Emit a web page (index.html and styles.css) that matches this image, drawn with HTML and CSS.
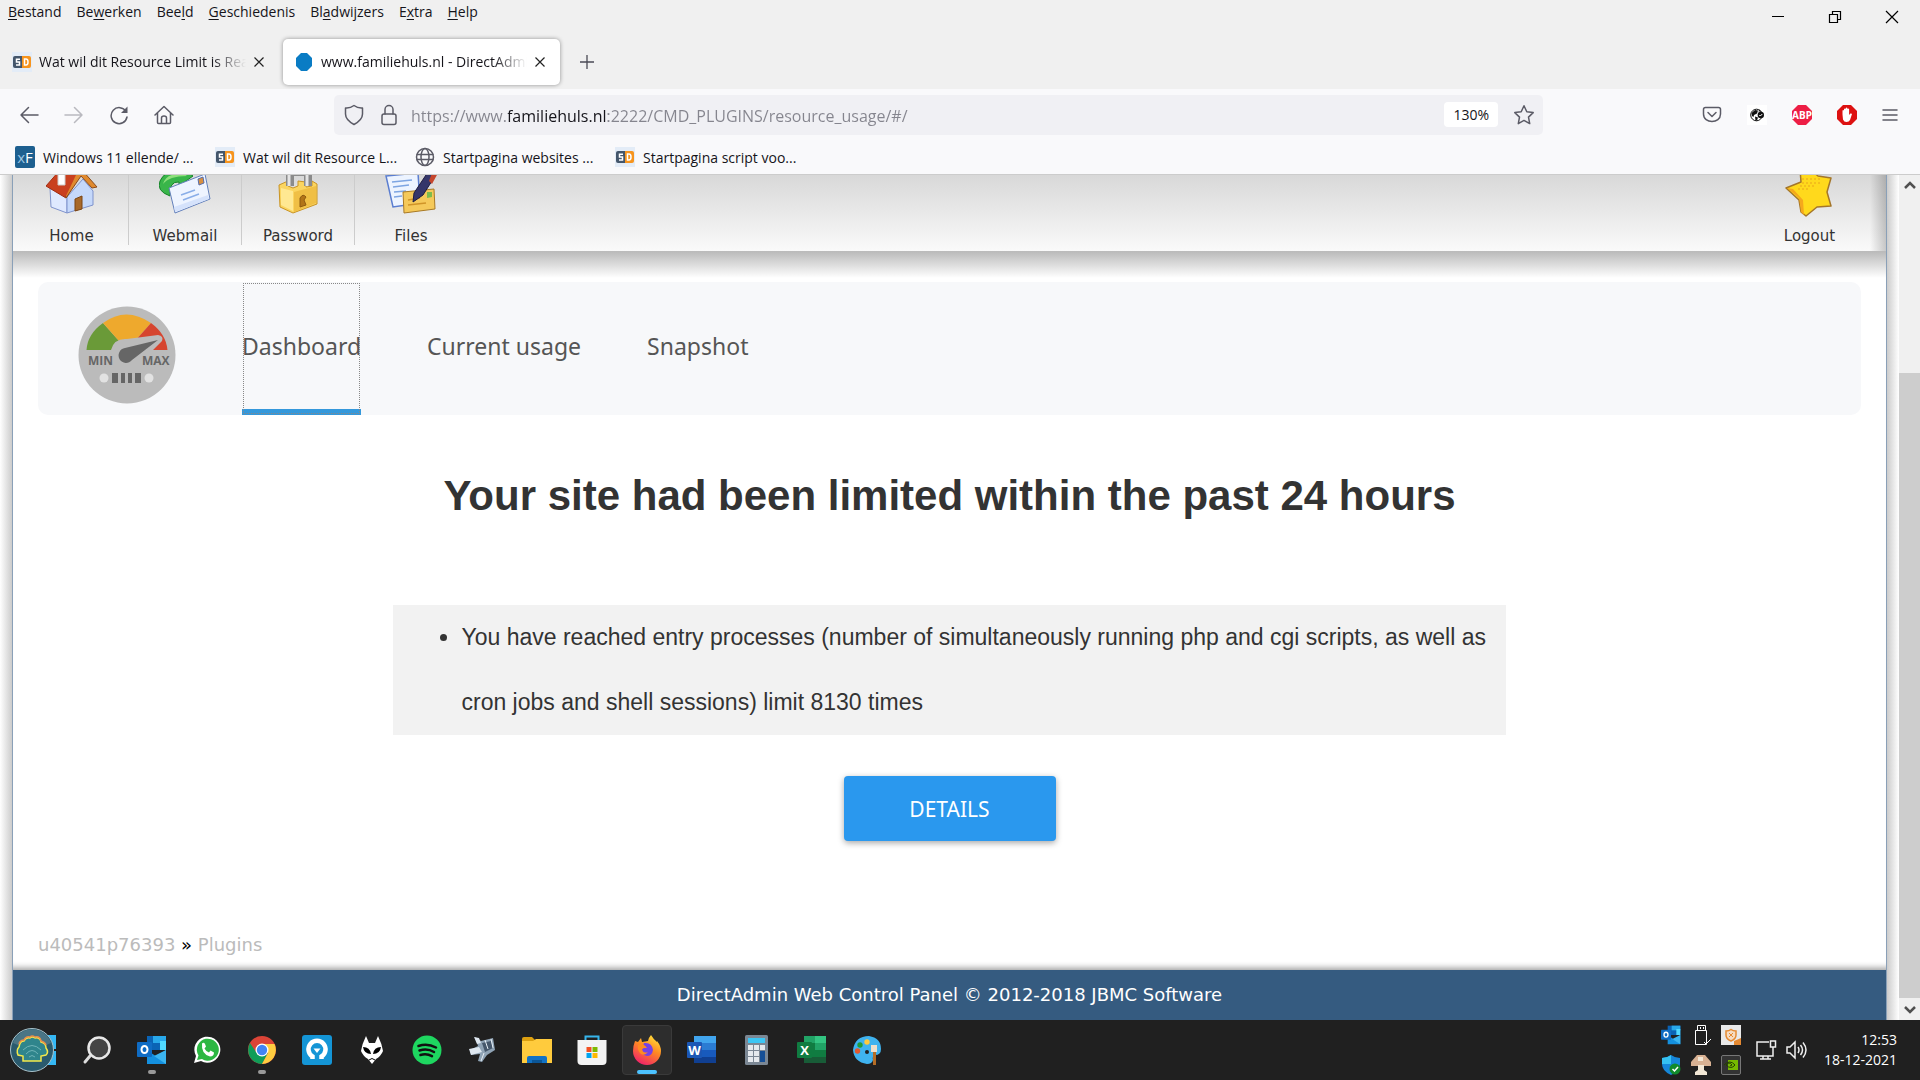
FILE: index.html
```html
<!DOCTYPE html>
<html lang="nl">
<head>
    <meta charset="UTF-8">
    <meta name="viewport" content="width=device-width, initial-scale=1.0">
    <title>www.familiehuls.nl - DirectAdmin</title>
    <link rel="stylesheet" href="styles.css">
</head>
<body>
    <svg class="defs" aria-hidden="true">
        <symbol id="sd" viewBox="0 0 20 20">
            <path fill="#e3ecf7" d="M0 0h20v20H0z"/>
            <path fill="#44566b" d="M3 4h7v12H3a2 2 0 0 1-2-2V6a2 2 0 0 1 2-2z"/>
            <path fill="#f7941d" d="M10 4h7a2 2 0 0 1 2 2v8a2 2 0 0 1-2 2h-7z"/>
            <path fill="none" stroke="#fff" stroke-width="1.5" d="M8 7.200H4.500v2.800H7.500v3H4M12.500 7v6h1.500q2 0 2-3t-2-3z"/>
        </symbol>
        <symbol id="close" viewBox="0 0 12 12">
            <path fill="none" stroke="#222" stroke-width="1.200" d="M1.500 1.500l9 9M10.500 1.500l-9 9"/>
        </symbol>
        <symbol id="outlook" viewBox="0 0 30 30">
            <path fill="#0a63b5" d="M10 1h19v14H10z"/>
            <path fill="#28a8ea" d="M16 1h13v7H16z"/>
            <path fill="#50d9ff" d="M23 6h6v9h-6z"/>
            <path fill="#1490df" d="M10 15l10 7 9-7v14H10z"/>
            <path fill="#3bb5f0" d="M29 15v14L17 21z"/>
            <rect x="0" y="7" width="15" height="15" rx="1" fill="#0f6cc4"/>
            <ellipse cx="7.500" cy="14.500" rx="3" ry="3.600" fill="none" stroke="#fff" stroke-width="2"/>
        </symbol>
    </svg>

    <header class="chrome">
        <div class="titlebar">
            <nav class="menubar">
                <button type="button"><u>B</u>estand</button>
                <button type="button">Be<u>w</u>erken</button>
                <button type="button">Bee<u>l</u>d</button>
                <button type="button"><u>G</u>eschiedenis</button>
                <button type="button">Bl<u>a</u>dwijzers</button>
                <button type="button">E<u>x</u>tra</button>
                <button type="button"><u>H</u>elp</button>
            </nav>
            <div class="window-buttons">
                <button type="button" aria-label="Minimaliseren"><svg width="14" height="14" viewBox="0 0 14 14"><path stroke="#000" d="M1 6.500h12"/></svg></button>
                <button type="button" aria-label="Verkleinen"><svg width="14" height="14" viewBox="0 0 14 14"><path fill="none" stroke="#000" stroke-width="1.200" d="M1.500 4.500h8v8h-8zM4.500 4.500v-3h8v8h-3"/></svg></button>
                <button type="button" aria-label="Sluiten"><svg width="14" height="14" viewBox="0 0 14 14"><path stroke="#000" stroke-width="1.200" d="M1 1l12 12M13 1L1 13"/></svg></button>
            </div>
        </div>

        <div class="tabstrip">
            <div class="browser-tab">
                <svg class="favicon" width="20" height="20"><use href="#sd"/></svg>
                <button type="button" class="tab-title">Wat wil dit Resource Limit is Reached</button>
                <button type="button" class="tab-close" aria-label="Tabblad sluiten"><svg width="12" height="12"><use href="#close"/></svg></button>
            </div>
            <div class="browser-tab active">
                <svg class="favicon" width="20" height="20" viewBox="0 0 20 20"><path fill="#0a7cc4" d="M7 1h6l5 5v8l-5 5H7l-5-5V6z"/></svg>
                <button type="button" class="tab-title">www.familiehuls.nl - DirectAdmin</button>
                <button type="button" class="tab-close" aria-label="Tabblad sluiten"><svg width="12" height="12"><use href="#close"/></svg></button>
            </div>
            <button type="button" class="new-tab" aria-label="Nieuw tabblad"><svg width="16" height="16" viewBox="0 0 16 16"><path stroke="#4a4a55" stroke-width="1.300" d="M8 1v14M1 8h14"/></svg></button>
        </div>

        <div class="navbar">
            <div class="nav-buttons">
                <button type="button" aria-label="Terug"><svg width="20" height="20" viewBox="0 0 20 20"><path class="line" d="M19 10H2M9.500 2.500L2 10l7.500 7.500"/></svg></button>
                <button type="button" class="dim" aria-label="Vooruit"><svg width="20" height="20" viewBox="0 0 20 20"><path class="line" d="M1 10h17M10.500 2.500L18 10l-7.500 7.500"/></svg></button>
                <button type="button" aria-label="Vernieuwen"><svg width="20" height="20" viewBox="0 0 20 20"><path class="line" d="M17 6.500A8 8 0 1 0 18 12"/><path fill="#5b5b66" d="M18.500 1.500V8H12z"/></svg></button>
                <button type="button" aria-label="Startpagina"><svg width="20" height="20" viewBox="0 0 20 20"><path class="line" d="M1 10l9-8.500L19 10M3.500 8v9.500q0 1 1 1h11q1 0 1-1V8M7.500 18.500V13q0-2 2.500-2t2.500 2v5.500"/></svg></button>
            </div>
            <div class="urlbar">
                <svg width="20" height="22" viewBox="0 0 20 22"><path class="line" d="M10 1.500q4 3 8.500 2.500V10c0 5-4 8-8.500 10.500C5.500 18 1.500 15 1.500 10V4Q6 4.500 10 1.500z"/></svg>
                <svg width="20" height="22" viewBox="0 0 20 22"><rect class="line" x="3" y="10" width="14" height="10.500" rx="2"/><path class="line" d="M6 10V5.500a4 4 0 0 1 8 0V10"/></svg>
                <input type="text" class="url" aria-label="Adres" value="https://www.familiehuls.nl:2222/CMD_PLUGINS/resource_usage/#/">
                <button type="button" class="zoom">130%</button>
                <button type="button" aria-label="Bladwijzer"><svg width="22" height="22" viewBox="0 0 22 22"><path class="line" d="M11 1.800l2.800 6 6.400.8-4.700 4.500 1.200 6.500L11 16.400l-5.700 3.200 1.200-6.500L1.800 8.600l6.400-.8z"/></svg></button>
            </div>
            <div class="extensions">
                <button type="button" aria-label="Pocket"><svg width="20" height="20" viewBox="0 0 20 20"><path class="line" d="M3.500 2.500h13q2 0 2 2V9c0 10-17 10-17 0V4.500q0-2 2-2zM6 7.500l4 4 4-4"/></svg></button>
                <button type="button" aria-label="Wereldbol"><svg width="20" height="20" viewBox="0 0 20 20"><path fill="#fff" d="M0 0h20v20H0z"/><circle cx="9.500" cy="10" r="5.800" fill="#fff" stroke="#111"/><path fill="#111" d="M4.500 8l3.500-3 3 .5-1 3-3 1.500-.5 2-1.500-1zM8 11.500l3 1-1 3-1.500.3zM12 4.500l2.500 2h-3z"/><circle cx="13.800" cy="10" r="3.200" fill="#111"/><path stroke="#fff" fill="none" d="M12.300 10l1 1 2-2"/></svg></button>
                <button type="button" aria-label="Adblock Plus"><svg width="20" height="20" viewBox="0 0 20 20"><path fill="#ed1e45" d="M6 0h8l6 6v8l-6 6H6l-6-6V6z"/><text x="10" y="13.500" text-anchor="middle" class="abp">ABP</text></svg></button>
                <button type="button" aria-label="Adblock"><svg width="20" height="20" viewBox="0 0 20 20"><path fill="#dd1111" d="M6 0h8l6 6v8l-6 6H6l-6-6V6z"/><path fill="#fff" d="M5.500 9.500V5.600q.8-1 1.500 0V4q.9-1 1.700 0V3q.9-1 1.700 0v1q.9-1 1.700 0v6l1.300-1.500q1.200-.4 1.600.5L13 15q-1 2-3.500 2t-3.500-2.500z"/></svg></button>
                <button type="button" aria-label="Menu"><svg width="16" height="16" viewBox="0 0 16 16"><path class="line" d="M1 3h14M1 8h14M1 13h14"/></svg></button>
            </div>
        </div>

        <nav class="bookmarks">
            <a href="#"><svg width="20" height="22" viewBox="0 0 20 22"><rect width="20" height="22" rx="2" fill="#1d5f8f"/><text x="10" y="17" text-anchor="middle" class="xf"><tspan fill="#9cc5e3">x</tspan>F</text></svg>Windows 11 ellende/ ...</a>
            <a href="#"><svg width="20" height="20"><use href="#sd"/></svg>Wat wil dit Resource L...</a>
            <a href="#"><svg width="20" height="20" viewBox="0 0 20 20"><circle class="line" cx="10" cy="10" r="8.500"/><ellipse class="line" cx="10" cy="10" rx="4" ry="8.500"/><path class="line" d="M2 7.500h16M2 12.500h16"/></svg>Startpagina websites ...</a>
            <a href="#"><svg width="20" height="20"><use href="#sd"/></svg>Startpagina script voo...</a>
        </nav>
    </header>

    <div class="viewport">
        <div class="gutter left"></div>
        <div class="page">
            <header class="skin-header">
                <nav class="skin-nav">
                    <a href="#">
                        <svg width="52" height="39" viewBox="0 -1 52 39"><path fill="#dfe9ff" stroke="#7f93cc" d="M4 12l17 9v16L5 31z"/><path fill="#c5d8fa" stroke="#7f93cc" d="M21 21L37 3l10 12v14L21 37z"/><path fill="#c9401f" stroke="#a02c12" d="M0 10L14-6 34-2 20 22z"/><path fill="#e08a2e" stroke="#8a4a1c" d="M14-6h22l15 17-5 1L35 0 20 22z"/><path fill="#c9401f" d="M1 10L14-6l16 5-10 21z"/><path fill="#fff" stroke="#ccc" d="M12-4h7v13h-7z"/><path fill="#a8692a" stroke="#7b4413" d="M29 23l7-3v13l-7 2z"/></svg>
                        Home
                    </a>
                    <a href="#">
                        <svg width="52" height="39" viewBox="0 -1 52 39"><path fill="#39b54a" stroke="#168329" d="M11 20Q-3 15 1 5 6-6 20-5v-5l14 10-14 10V6Q10 5 11 20z"/><path fill="#8fe07d" d="M4 8Q7-2 20-2l1-3 7 5Q10 0 4 8z"/><path fill="#eef4ff" stroke="#6380bb" d="M10 12L46-2l5 25-35 14z"/><path fill="#d5e2fb" d="M15 31l34-12 1 4-34 13z"/><path stroke="#8aaee8" stroke-width="1.500" d="M22 19l14-5M24 24l16-6"/><path fill="#d99040" stroke="#566caa" d="M39 3l5-2 1 6-5 2z"/></svg>
                        Webmail
                    </a>
                    <a href="#">
                        <svg width="52" height="39" viewBox="0 -1 52 39"><path fill="#fbd560" stroke="#c99425" d="M7 9l9-4v5l5 2 5-2V5l8 1v5l6-1V5l5 3v20L21 37 8 31z"/><path fill="#ffe892" d="M9 12l12 3v20L9 29z"/><path fill="#f0bf45" d="M22 16l22-6v17l-22 9z"/><path fill="none" stroke="#8b8b8b" stroke-width="8" d="M18 10V-4h18v14"/><path fill="none" stroke="#e4e4e4" stroke-width="3" d="M17 10V-4h18v14"/><path fill="#b27418" stroke="#8e5a10" d="M28 22q3-5 6-1l-2 3 2 5-6 2z"/></svg>
                        Password
                    </a>
                    <a href="#">
                        <svg width="52" height="39" viewBox="0 -1 52 39"><path fill="#edf4ff" stroke="#5b7ed0" stroke-width="1.500" d="M1 0l32-3 2 30-27 4z"/><path stroke="#7da5e2" stroke-width="1.500" d="M7 6l20-2M8 11l16-2M9 16l12-1M9 21l8-1"/><path fill="#f5c95a" stroke="#a97a25" d="M18 16l31-3 1 20-31 4z"/><path stroke="#d09428" stroke-width="1.500" d="M23 24l12-2M23 29l18-2"/><path fill="#7dbb4e" d="M42 16h5v5l-5 1z"/><path fill="#35366a" stroke="#1d1c40" d="M28 26l1-9L43-4l9 1-14 22z"/><path fill="#c5462d" d="M44 5l3-8h6l-6 11z"/></svg>
                        Files
                    </a>
                </nav>
                <a href="#" class="logout">
                    <svg width="52" height="42" viewBox="0 0 52 42"><path fill="#ffd91c" stroke="#a4762a" stroke-width="1.500" stroke-linejoin="round" d="M16-6h10l8 7 13 2-4 14 4 14-14 1-11 9-5-4-2-12L2 13l15-6z"/><path fill="#f5a81c" d="M3 13l12 10 2 14 3 3-1-15L9 14z"/><path stroke="#e9a51b" stroke-dasharray="2 2" d="M18 4h18M18 8h18M16 11h14M14 14h10"/></svg>
                    Logout
                </a>
            </header>

            <main class="plugin">
                <nav class="plugin-nav">
                    <svg class="gauge" width="98" height="98" viewBox="0 0 98 98">
                        <circle cx="49" cy="49" r="48.500" fill="#bbb"/>
                        <path fill="#6a9a38" d="M8.500 44Q9.500 28 25 17l24 27z"/>
                        <path fill="#eea92d" d="M25 17Q48 0 73 17L49 44z"/>
                        <path fill="#d6452f" d="M73 17Q88 28 89.500 44H49z"/>
                        <path fill="#bbb" d="M33 44Q36 32 49 33L80 29q6 1 4 6L74 45v3H33z"/>
                        <path fill="#666" d="M80 34L54 54a7.500 7.500 0 1 1-7-12z"/>
                        <text x="10" y="59" class="gauge-text">MIN</text>
                        <text x="64" y="59" class="gauge-text">MAX</text>
                        <circle cx="26" cy="72" r="4.500" fill="#e2e2e2"/>
                        <circle cx="71" cy="72" r="4.500" fill="#e2e2e2"/>
                        <path fill="#666" d="M34 67h6v10h-6zM43 67h4v10h-4zM50 67h4v10h-4zM57 67h6v10h-6z"/>
                    </svg>
                    <a href="#" class="current">Dashboard</a>
                    <a href="#">Current usage</a>
                    <a href="#">Snapshot</a>
                </nav>

                <h1>Your site had been limited within the past 24 hours</h1>
                <ul class="limits">
                    <li>You have reached entry processes (number of simultaneously running php and cgi scripts, as well as cron jobs and shell sessions) limit 8130 times</li>
                </ul>
                <button type="button" class="details">DETAILS</button>

                <div class="breadcrumb"><a href="#">u40541p76393</a> » <a href="#">Plugins</a></div>
            </main>

            <footer class="skin-footer">DirectAdmin Web Control Panel © 2012-2018 JBMC Software</footer>
        </div>
        <div class="gutter right"></div>
        <div class="scrollbar">
            <svg width="12" height="8" viewBox="0 0 12 8"><path fill="none" stroke="#505050" stroke-width="2.500" d="M1 7l5-5 5 5"/></svg>
            <div class="thumb"></div>
            <svg width="12" height="8" viewBox="0 0 12 8"><path fill="none" stroke="#505050" stroke-width="2.500" d="M1 1l5 5 5-5"/></svg>
        </div>
    </div>

    <footer class="taskbar">
        <div class="apps">
            <button type="button" class="start" aria-label="Start"><svg width="50" height="46" viewBox="0 0 50 46"><path fill="#35b8f5" d="M30 8h16v14H30zM30 24h16v14H30z"/><circle cx="22" cy="23" r="21.500" fill="#2a5a6d" stroke="#a9c3cc"/><path fill="#4a7585" d="M3 16a20 20 0 0 1 38 0q-19 9-38 0z"/><path fill="#2f858c" stroke="#f4e94a" stroke-width="1.500" d="M13 34v-5l-5-1q-2-5 1-8 1-6 5-6 2-4 6-3 2-2 5 0 5-1 6 4 5 1 5 6 3 4 0 7l-5 1v5z"/><path fill="none" stroke="#e98f49" stroke-width="1.500" d="M9 17q1-4 5-4 2-4 6-3 2-2 5 0 5-1 6 4 4 1 5 4"/><path fill="none" stroke="#6fb4b8" d="M16 27q6-7 12 0M13 23q9-9 18 0M19 30q3-3 6 0"/></svg></button>
            <button type="button" aria-label="Zoeken"><svg width="30" height="30" viewBox="0 0 30 30"><path stroke="#ddd" stroke-width="3" stroke-linecap="round" d="M8 21l-5 6"/><circle cx="17" cy="13" r="10.500" fill="#444" stroke="#e8e8e8" stroke-width="2.500"/></svg></button>
            <button type="button" class="open" aria-label="Outlook"><svg width="30" height="30"><use href="#outlook"/></svg></button>
            <button type="button" aria-label="WhatsApp"><svg width="30" height="30" viewBox="0 0 30 30"><path fill="#fff" d="M2 28l2-7A13 13 0 1 1 9 26z"/><path fill="#2cb742" d="M5 25l1.500-4.500A11 11 0 1 1 10 24z"/><path fill="#fff" d="M10 8.500q2-1.500 3 .5l1 2.500-1.500 2q1.500 3 4.500 4l1.500-2 3.500 2q0 4-4 4Q9 19 10 8.500z"/></svg></button>
            <button type="button" class="open" aria-label="Chrome"><svg width="30" height="30" viewBox="0 0 30 30"><circle cx="15" cy="15" r="14" fill="#db4437"/><path fill="#0f9d58" d="M3 8a14 14 0 0 0 12 21l6-11-6 2-6-3z"/><path fill="#ffcd40" d="M15 9h12.500A14 14 0 0 1 15 29l6-11z"/><circle cx="15" cy="15" r="6.500" fill="#fff"/><circle cx="15" cy="15" r="5.200" fill="#4285f4"/></svg></button>
            <button type="button" aria-label="Ziggo"><svg width="30" height="30" viewBox="0 0 30 30"><rect width="30" height="30" rx="3" fill="#1495d6"/><path fill="none" stroke="#fff" stroke-width="4.500" d="M10.500 24v-2.500a8.500 8.500 0 1 1 9 0V24"/><path fill="#fff" d="M11.500 13.500h7L15 18z"/></svg></button>
            <button type="button" aria-label="foobar2000"><svg width="30" height="30" viewBox="0 0 30 30"><path fill="#fff" d="M9 1l3 7h6l3-7q4 8 5 15-2 5-7 8l-4 5-4-5q-5-3-7-8Q5 9 9 1z"/><path d="M6 12q7 0 8 7-7 0-8-7zM24 12q-7 0-8 7 7 0 8-7z"/><path fill="none" stroke="#000" d="M12 25q3-3 6 0"/></svg></button>
            <button type="button" aria-label="Spotify"><svg width="30" height="30" viewBox="0 0 30 30"><circle cx="15" cy="15" r="14.500" fill="#1ed760"/><path fill="none" stroke="#111" stroke-width="2.500" stroke-linecap="round" d="M6.500 11q9-3 17.500 1.500M7.500 15.500q8-2.500 14.500 1.500M8.500 20q6-2 11.500 1.200"/></svg></button>
            <button type="button" aria-label="Camera"><svg width="30" height="30" viewBox="0 0 30 30"><path fill="#8fa3b5" d="M8 2l6 4 12-3 2 12-8 5-5 7-4-1 2-7-9 1-1-5 8-4z"/><path fill="#45576b" d="M15 8l9-2 2 7-8 4z"/><path fill="#dfe8f0" d="M2 14l10-2 3 5-11 3zM7 2l5 1 2 5-4 1z"/><path stroke="#e8f0f6" d="M18 5l3 9M24 4l2 9M17 18l-3 8"/></svg></button>
            <button type="button" aria-label="Verkenner"><svg width="30" height="30" viewBox="0 0 30 30"><path fill="#dca010" d="M0 4q0-2 2-2h8l3 3v5H0z"/><path fill="#ffcb3d" d="M0 6h11l3-2h16v24H0z"/><path fill="#1272c4" d="M5 28v-5q0-2 2-2h16q2 0 2 2v5z"/><path fill="#0b5697" d="M10 25h10v3H10z"/></svg></button>
            <button type="button" aria-label="Store"><svg width="30" height="30" viewBox="0 0 30 30"><path fill="none" stroke="#36b5ec" stroke-width="2" d="M8.500 6V1.500h13V6"/><path fill="#f3f3f3" d="M.5 5h29v21q0 4-4 4h-21q-4 0-4-4z"/><path fill="#f25022" d="M9.500 12h5v5h-5z"/><path fill="#7fba00" d="M15.500 12h5v5h-5z"/><path fill="#00a4ef" d="M9.500 18h5v5h-5z"/><path fill="#ffb900" d="M15.500 18h5v5h-5z"/></svg></button>
            <button type="button" class="focused" aria-label="Firefox"><svg width="30" height="30" viewBox="0 0 30 30"><defs><linearGradient id="fx" x1=".8" y1="0" x2=".3" y2="1"><stop offset="0" stop-color="#ffe43b"/><stop offset=".45" stop-color="#ff8a22"/><stop offset="1" stop-color="#f0206b"/></linearGradient></defs><path fill="url(#fx)" d="M3 6l3 1 3-4 1 4 6-1q1-4 3-6 3 5 6 7v-1q4 5 4 10a14 14 0 0 1-28 0Q1 11 3 6z"/><path fill="#7542e5" d="M12 8q8-1 9 7-1 6-6 6-5-1-6-5l2-3h4q-1-2-4-3z"/><path fill="#ff8a22" d="M6 10l5-1 3 3-4 2q1 5 6 3-3 4-7 2-4-3-3-9z"/></svg></button>
            <button type="button" aria-label="Word"><svg width="30" height="30" viewBox="0 0 30 30"><path fill="#41a5ee" d="M7 1h22v7H7z"/><path fill="#2b7cd3" d="M7 8h22v7H7z"/><path fill="#185abd" d="M7 15h22v7H7z"/><path fill="#103f91" d="M7 22h22v6H7z"/><rect y="7" width="15" height="16" rx="1" fill="#1b57b5"/><text x="7.500" y="19.500" text-anchor="middle" class="office">W</text></svg></button>
            <button type="button" aria-label="Rekenmachine"><svg width="30" height="30" viewBox="0 0 30 30"><rect x="3" width="23" height="30" rx="1.500" fill="#7b8794"/><path fill="#3cc6f4" d="M6 3h17v5H6z"/><path fill="#e5e9ed" d="M6 10h5v5H6zM12 10h5v5h-5zM18 10h5v5h-5zM6 16h5v5H6zM12 16h5v5h-5zM6 22h5v5H6zM12 22h5v5h-5z"/><path fill="#164f96" d="M18 16h5v11h-5z"/></svg></button>
            <button type="button" aria-label="Excel"><svg width="30" height="30" viewBox="0 0 30 30"><path fill="#21a366" d="M7 1h22v7H7z"/><path fill="#33c481" d="M18 1h11v7H18z"/><path fill="#107c41" d="M7 8h22v14H7z"/><path fill="#21a366" d="M18 8h11v7H18z"/><path fill="#185c37" d="M7 22h22v6H7z"/><rect y="7" width="15" height="16" rx="1" fill="#107c41"/><text x="7.500" y="19.500" text-anchor="middle" class="office">X</text></svg></button>
            <button type="button" aria-label="Paint"><svg width="30" height="30" viewBox="0 0 30 30"><path fill="#3fb3ef" d="M17 1q12 2 12 13 0 6-6 6-3 1-2 5-1 4-6 4Q2 27 1 15 3 1 17 1z"/><circle cx="15" cy="7" r="2.700" fill="#ffca3d"/><circle cx="8" cy="10" r="2.700" fill="#1e9b3b"/><circle cx="5.500" cy="16" r="2.700" fill="#e0592e"/><circle cx="15" cy="17" r="2" fill="#222"/><path fill="#eee0cc" d="M19 10h6v7h-6z"/><path fill="#b46d26" d="M21 17h3v13h-3z"/></svg></button>
        </div>
        <div class="tray">
            <div class="tray-icons">
                <svg width="20" height="20"><use href="#outlook"/></svg>
                <svg width="20" height="20" viewBox="0 0 20 20"><path fill="none" stroke="#fff" d="M6.500 5.500v-5h8v5M4.500 5.500h11v14h-11zM9.500 2v2M12.500 2v2"/><path stroke="#fff" fill="none" d="M13 17l2 2 5-5"/></svg>
                <svg width="20" height="20" viewBox="0 0 20 20"><path fill="#e9e9e9" d="M0 0h20v20H0z"/><path fill="#f6dcc2" stroke="#e58a32" stroke-width="1.500" d="M5 6q3 0 5-1.500Q12 6 15 6v4q0 4-5 6-5-2-5-6z"/><path stroke="#e58a32" d="M8 8l4 4M12 8l-4 4"/><path fill="#e58a32" d="M13 16l7-3v7h-7z"/></svg>
                <svg width="20" height="20" viewBox="0 0 20 20"><path fill="#1686d9" d="M10 0q4 3 9 3v6q0 7-9 11Q1 16 1 9V3q5 0 9-3z"/><path fill="#35c1f1" d="M10 0v9H1V3q5 0 9-3z"/><circle cx="14" cy="14" r="5.500" fill="#118a2c"/><path fill="none" stroke="#fff" stroke-width="1.500" d="M11.500 14l2 2 3.500-4"/></svg>
                <svg width="20" height="20" viewBox="0 0 20 20"><path fill="#d8b193" d="M6 0h8l6 7v4H0V7z"/><path fill="#f2e7d5" d="M7 10h6v5l3 2v3H4v-3l3-2zM7 2h5v4H7z"/></svg>
                <svg width="20" height="20" viewBox="0 0 20 20"><rect x=".5" y=".5" width="19" height="19" rx="1.500" fill="#333" stroke="#777"/><path fill="#76b900" d="M7 5h10v10H7z"/><path fill="none" stroke="#244000" d="M3 10q6-6 11 0-4 5-9 0 3-4 6 0l-2 1"/></svg>
            </div>
            <svg width="22" height="22" viewBox="0 0 22 22"><path fill="none" stroke="#eee" stroke-width="1.500" d="M14 3H2v14h16v-7M5 20h11M8 17v3M13 17v3M15.500 2h5v6h-5zM18 8v9"/></svg>
            <svg width="22" height="20" viewBox="0 0 22 20"><path fill="none" stroke="#eee" stroke-width="1.500" d="M2 7h3l5-5v16l-5-5H2zM13 7q2 3 0 6M15.500 5q4 5 0 10M18 2.500q6 7.500 0 15"/></svg>
            <div class="clock"><time>12:53</time><time>18-12-2021</time></div>
        </div>
    </footer>
</body>
</html>
```
FILE: styles.css
```css
* {
    box-sizing: border-box;
}
body {
    display: flex;
    flex-direction: column;
    min-height: 100vh;
    margin: 0;
    font-family: "Open Sans", "Noto Sans", sans-serif;
    font-size: 14px;
    color: #15141a;
    background: #fff;
}
button {
    font: inherit;
    color: inherit;
    padding: 0;
    border: none;
    background: none;
    cursor: pointer;
}
a {
    color: inherit;
    text-decoration: none;
}
svg {
    display: block;
    flex: none;
}
.defs {
    position: absolute;
    width: 0;
    height: 0;
}
.line {
    fill: none;
    stroke: #5b5b66;
    stroke-width: 1.5;
    stroke-linecap: round;
    stroke-linejoin: round;
}

/* browser chrome */
.chrome {
    background: #f9f9fb;
    border-bottom: 1px solid #ccc;
}
.titlebar {
    display: flex;
    justify-content: space-between;
    height: 34px;
    background: #f0f0f0;
}
.menubar {
    display: flex;
    align-items: flex-start;
    gap: 15px;
    padding: 2px 8px;
}
.menubar u {
    text-underline-offset: 2px;
}
.window-buttons {
    display: flex;
}
.window-buttons button {
    display: grid;
    place-items: center;
    width: 57px;
}
.tabstrip {
    display: flex;
    align-items: center;
    height: 55px;
    padding: 0 4px;
    background: #f0f0f0;
}
.browser-tab {
    display: flex;
    align-items: center;
    gap: 7px;
    width: 277px;
    height: 46px;
    padding: 0 16px 0 8px;
    border-radius: 5px;
}
.browser-tab.active {
    background: #fff;
    box-shadow: 0 0 4px rgba(0, 0, 0, 0.4);
    margin-left: 2px;
    padding: 0 14px 0 11px;
}
.tab-title {
    flex: 1;
    overflow: hidden;
    white-space: nowrap;
    text-align: left;
    -webkit-mask-image: linear-gradient(to left, transparent, #000 34px);
    mask-image: linear-gradient(to left, transparent, #000 34px);
}
.new-tab {
    display: grid;
    place-items: center;
    width: 44px;
    height: 44px;
    margin-left: 5px;
}
.navbar {
    display: flex;
    align-items: center;
    height: 51px;
    padding: 0 22px 0 19px;
}
.nav-buttons {
    display: flex;
    gap: 25px;
    width: 315px;
}
.dim {
    opacity: 0.4;
}
.urlbar {
    display: flex;
    align-items: center;
    gap: 15px;
    flex: 1;
    height: 40px;
    padding: 0 8px 0 10px;
    border-radius: 5px;
    background: #f0f0f4;
}
.url {
    flex: 1;
    min-width: 0;
    padding: 2px 0 0;
    margin-left: -3px;
    border: none;
    outline: none;
    font: 16px "Open Sans", "Noto Sans", sans-serif;
    background: linear-gradient(to right, #85858e 97px, #15141a 97px, #15141a 197px, #85858e 197px);
    -webkit-background-clip: text;
    background-clip: text;
    -webkit-text-fill-color: transparent;
}
.zoom {
    height: 25px;
    padding: 0 9px;
    border-radius: 4px;
    background: #fff;
    font-size: 14px;
}
.extensions {
    display: flex;
    align-items: center;
    gap: 25px;
    padding-left: 159px;
}
.bookmarks {
    display: flex;
    height: 34px;
    padding: 0 15px;
}
.bookmarks a {
    display: flex;
    align-items: center;
    gap: 8px;
    width: 200px;
    white-space: nowrap;
}
.abp {
    font: bold 10px "Noto Sans", sans-serif;
    fill: #fff;
}
.xf {
    font: 15px "Open Sans", sans-serif;
    fill: #fff;
}

/* DirectAdmin page */
.viewport {
    display: flex;
    flex: 1;
}
.gutter {
    width: 12px;
}
.gutter.left {
    background: linear-gradient(to right, #fff, #ccc);
}
.gutter.right {
    background: linear-gradient(to left, #fff, #ccc);
}
.page {
    display: flex;
    flex-direction: column;
    flex: 1;
    border: solid #8aa0b8;
    border-width: 0 1px;
}
.skin-header {
    display: flex;
    justify-content: space-between;
    height: 77px;
    padding-left: 2px;
    overflow: hidden;
    border-bottom: 1px solid #bbb;
    background: linear-gradient(to left, rgba(0, 0, 0, 0.2), transparent 16px), linear-gradient(#d8d8d8, #fafafa);
    font-family: "DejaVu Sans", sans-serif;
    font-size: 15px;
    color: #333;
}
.skin-nav {
    display: flex;
}
.skin-header a {
    display: flex;
    flex-direction: column;
    align-items: center;
    justify-content: space-between;
    width: 113px;
    height: 70px;
}
.skin-nav a + a {
    border-left: 1px solid #ccc;
}
.skin-header .logout {
    width: 153px;
}
.plugin {
    display: flex;
    flex-direction: column;
    align-items: center;
    flex: 1;
    padding: 30px 25px 0;
    background: linear-gradient(#bbb, #fff 26px), #fff;
    box-shadow: inset 0 -8px 6px -6px rgba(0, 0, 0, 0.4);
}
.plugin-nav {
    display: flex;
    align-items: center;
    gap: 66px;
    align-self: stretch;
    height: 133px;
    padding-left: 40px;
    border-radius: 10px;
    background: #f7f8fa;
    font-family: "Noto Sans", sans-serif;
    font-size: 23px;
    color: #555;
}
.plugin-nav a {
    display: flex;
    align-items: center;
    height: 133px;
    border-bottom: 6px solid transparent;
}
.plugin-nav .current {
    border-color: #3498db;
    outline: 1px dotted #888;
    outline-offset: -2px;
}
.gauge {
    margin-top: 12px;
}
.gauge-text {
    font: bold 12px "Open Sans", sans-serif;
    fill: #666;
}
.plugin h1 {
    margin: 55px 0 83px;
    font: bold 42px/52px "Liberation Sans", Arial, sans-serif;
    color: #333;
}
.limits {
    width: 61%;
    margin: 0;
    padding: 0 10px 0 68px;
    background: #f2f2f2;
    font: 23px/65px "Liberation Sans", Arial, sans-serif;
    color: #333;
}
.details {
    width: 212px;
    height: 65px;
    margin: 41px 0 91px;
    border-radius: 4px;
    background: #2a98ee;
    box-shadow: 0 2px 6px rgba(0, 0, 0, 0.35);
    font-family: "Noto Sans", sans-serif;
    font-size: 21px;
    color: #fff;
}
.breadcrumb {
    align-self: flex-start;
    font: 18px/26px "DejaVu Sans", sans-serif;
    color: #000;
}
.breadcrumb a {
    color: #bbb;
}
.skin-footer {
    height: 50px;
    background: #355b80;
    font: 18px/50px "DejaVu Sans", sans-serif;
    color: #fff;
    text-align: center;
}
.scrollbar {
    display: flex;
    flex-direction: column;
    align-items: center;
    width: 21px;
    padding: 6px 0;
    background: #f0f0f0;
}
.thumb {
    align-self: stretch;
    flex: 1;
    margin: 184px 0 8px;
    background: #cdcdcd;
}

/* taskbar */
.taskbar {
    display: flex;
    justify-content: space-between;
    height: 60px;
    padding: 0 23px 0 17px;
    background: #202020;
    color: #fff;
}
.apps {
    display: flex;
    align-items: center;
    gap: 5px;
}
.apps button {
    position: relative;
    display: grid;
    place-items: center;
    width: 50px;
    height: 50px;
    border-radius: 4px;
}
.apps .start {
    margin-left: -7px;
    margin-right: 7px;
}
.apps .focused {
    background: #2d2d2d;
    border: 1px solid #3a3a3a;
}
.open::after,
.focused::after {
    content: "";
    position: absolute;
    bottom: 1px;
    width: 8px;
    height: 4px;
    border-radius: 2px;
    background: #999;
}
.focused::after {
    bottom: 0;
    width: 20px;
    background: #4cc2ff;
}
.office {
    font: bold 13px "Open Sans", sans-serif;
    fill: #fff;
}
.tray {
    display: flex;
    align-items: center;
    gap: 8px;
}
.tray-icons {
    display: grid;
    grid-template-columns: repeat(3, 20px);
    gap: 10px;
    margin-right: 6px;
}
.clock {
    display: flex;
    flex-direction: column;
    width: 82px;
    text-align: right;
    line-height: 20px;
}
```
